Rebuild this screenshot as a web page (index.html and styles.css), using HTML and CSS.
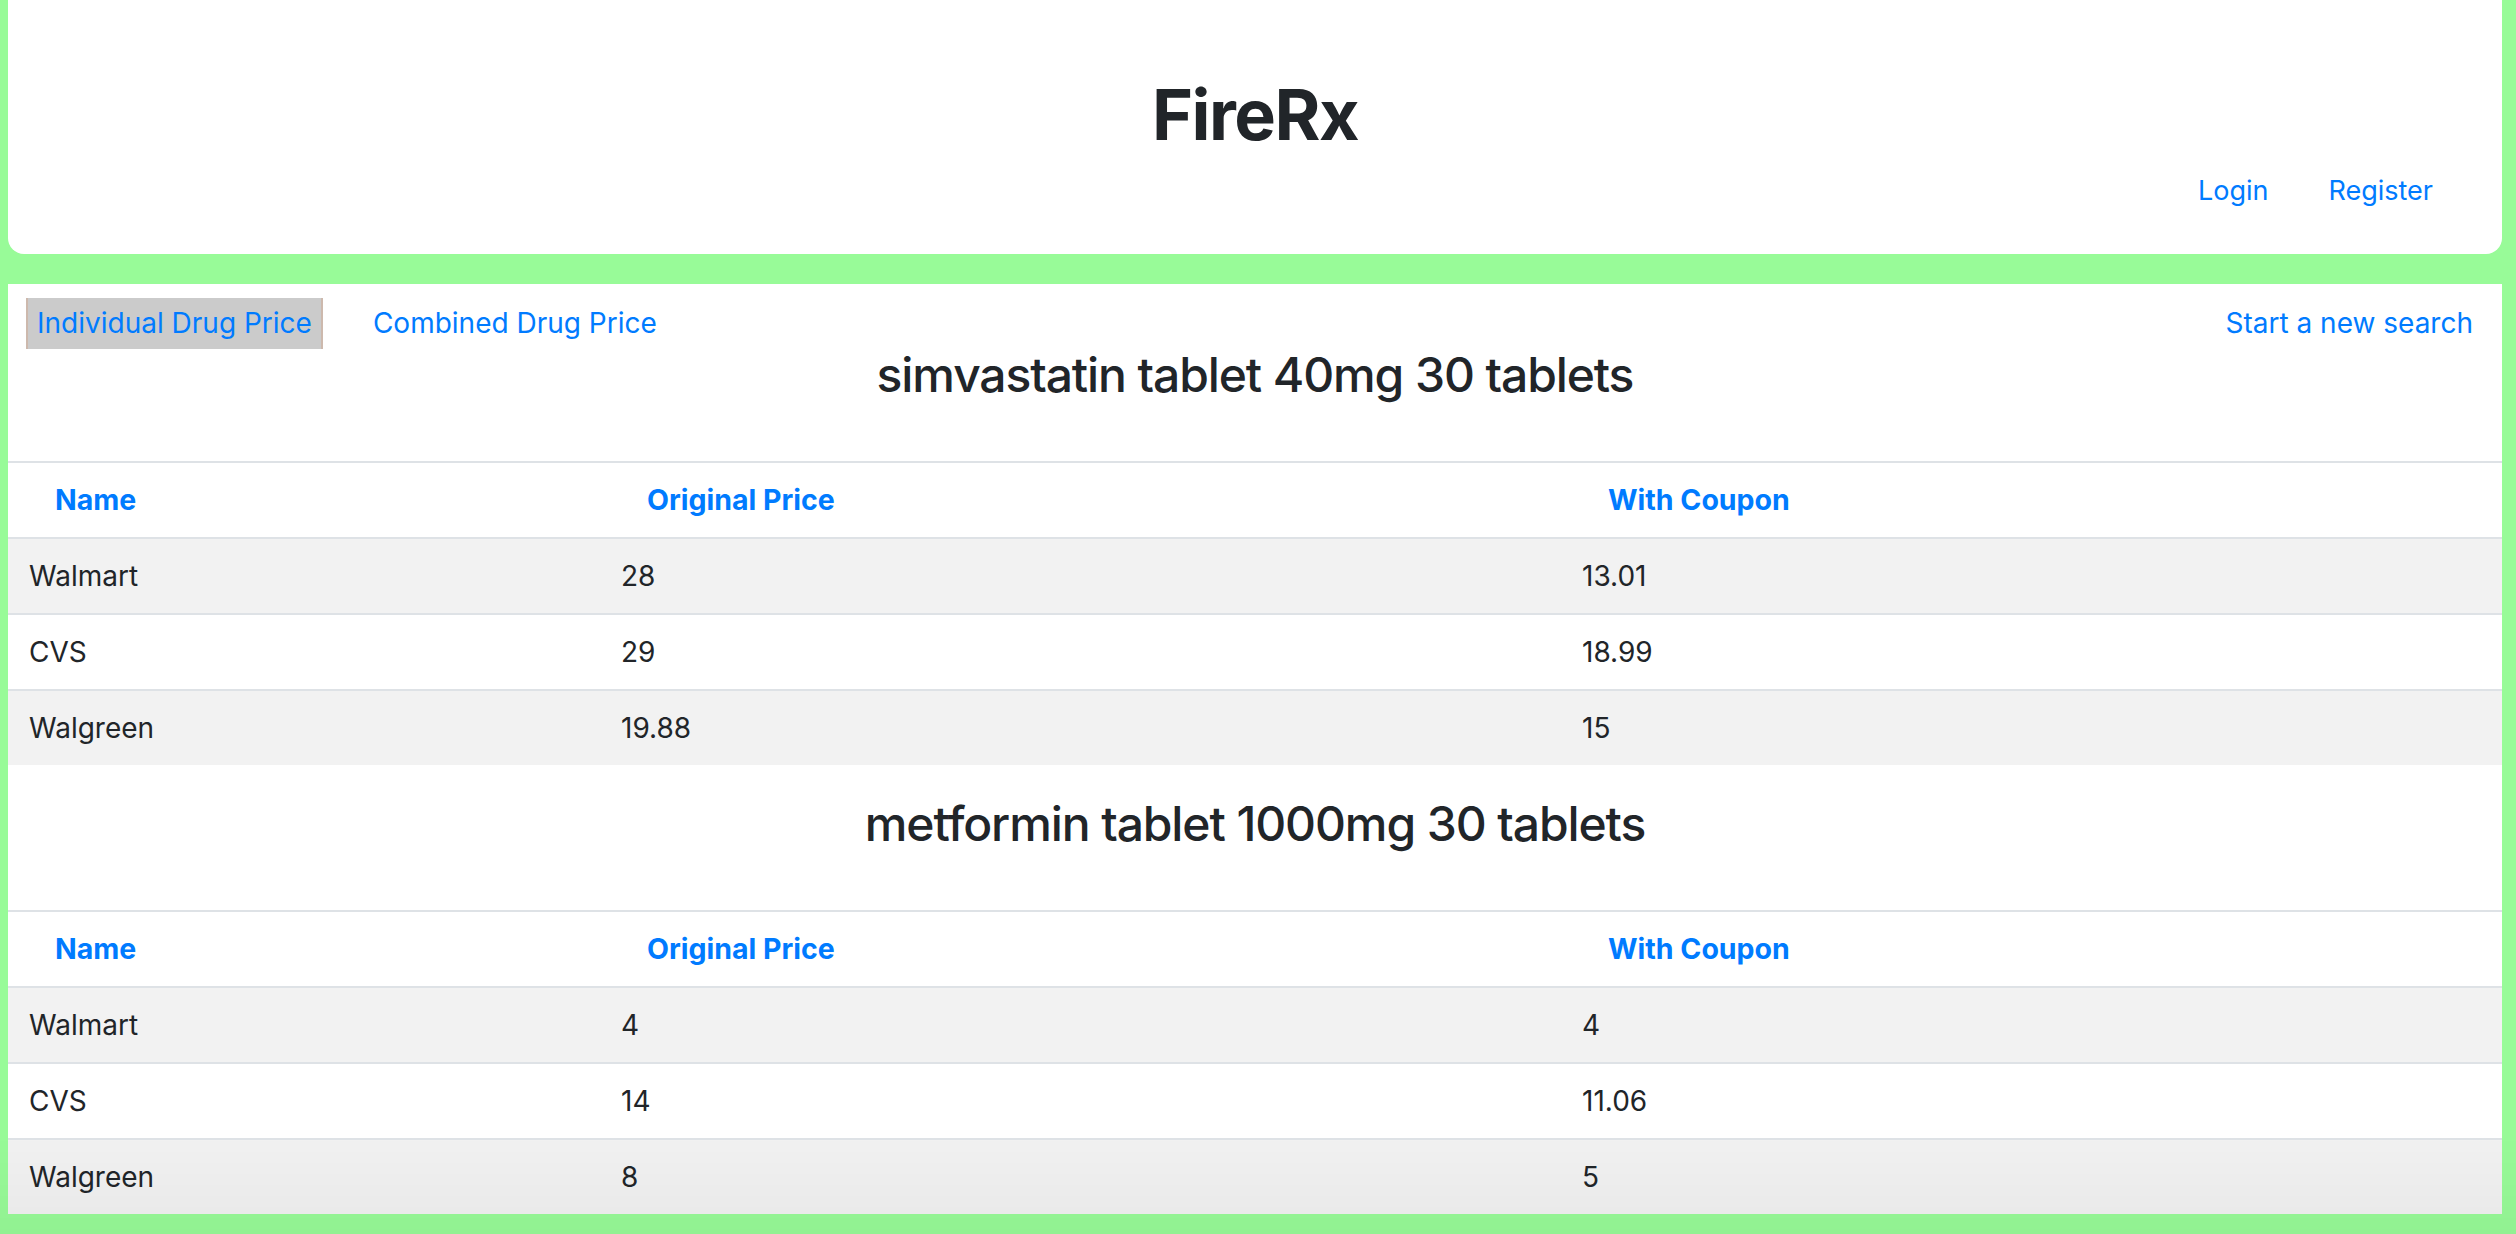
FILE: index.html
```html
<!DOCTYPE html>
<html lang="en">
<head>
<meta charset="utf-8">
<title>FireRx</title>
<link rel="stylesheet" href="styles.css">
</head>
<body>
<header class="top">
  <h1 class="brand">FireRx</h1>
  <nav class="auth">
    <a href="#">Login</a>
    <a href="#">Register</a>
  </nav>
</header>
<main class="content">
  <div class="tabs">
    <a href="#" class="tab active">Individual Drug Price</a>
    <a href="#" class="tab">Combined Drug Price</a>
    <a href="#" class="new-search">Start a new search</a>
  </div>

  <section class="drug">
    <h2 class="drug-title">simvastatin tablet 40mg 30 tablets</h2>
    <table class="prices">
      <colgroup><col class="c-name"><col class="c-orig"><col></colgroup>
      <thead>
        <tr><th>Name</th><th>Original Price</th><th>With Coupon</th></tr>
      </thead>
      <tbody>
        <tr><td>Walmart</td><td>28</td><td>13.01</td></tr>
        <tr><td>CVS</td><td>29</td><td>18.99</td></tr>
        <tr><td>Walgreen</td><td>19.88</td><td>15</td></tr>
      </tbody>
    </table>
  </section>

  <section class="drug">
    <h2 class="drug-title">metformin tablet 1000mg 30 tablets</h2>
    <table class="prices">
      <colgroup><col class="c-name"><col class="c-orig"><col></colgroup>
      <thead>
        <tr><th>Name</th><th>Original Price</th><th>With Coupon</th></tr>
      </thead>
      <tbody>
        <tr><td>Walmart</td><td>4</td><td>4</td></tr>
        <tr><td>CVS</td><td>14</td><td>11.06</td></tr>
        <tr><td>Walgreen</td><td>8</td><td>5</td></tr>
      </tbody>
    </table>
  </section>
</main>
</body>
</html>
```

FILE: styles.css
```css
* { box-sizing: border-box; }

html, body {
  margin: 0;
}

body {
  background: #98fb98;
  padding: 0 14px 40px 8px;
  font-family: Inter, "Noto Sans", "Liberation Sans", sans-serif;
  font-size: 28px;
  color: #212529;
}

body::after {
  content: "";
  position: fixed;
  left: 0;
  right: 0;
  bottom: 0;
  height: 110px;
  background: linear-gradient(to bottom, rgba(0,0,0,0), rgba(0,0,0,0.04));
  pointer-events: none;
}

a {
  color: #007bff;
  text-decoration: none;
}

.top {
  background: #fff;
  border-radius: 0 0 16px 16px;
  height: 254px;
  padding-top: 79px;
}

.brand {
  margin: 0;
  text-align: center;
  font-size: 70px;
  line-height: 72px;
  font-weight: 700;
  letter-spacing: -1.5px;
}

.auth {
  display: flex;
  justify-content: flex-end;
  gap: 60px;
  margin-top: 20px;
  padding-right: 69px;
  font-size: 27px;
  line-height: 40px;
}

.content {
  background: #fff;
  margin-top: 30px;
}

.tabs {
  display: flex;
  align-items: center;
  padding: 14px 29px 0 18px;
  font-size: 28px;
}

.tab {
  line-height: 51px;
  height: 51px;
  padding: 0 9px;
  border-left: 2px solid transparent;
  border-right: 2px solid transparent;
}

.tab.active {
  background: #cbcbcb;
  border-left-color: #cdb9ad;
  border-right-color: #cdb9ad;
}

.tab + .tab {
  margin-left: 39px;
}

.new-search {
  margin-left: auto;
  line-height: 51px;
}

.drug + .drug {
  margin-top: 33px;
}

.drug-title {
  margin: 0 0 60px;
  text-align: center;
  font-size: 48px;
  line-height: 52px;
  font-weight: 500;
  letter-spacing: -1.1px;
}

.prices {
  width: 100%;
  border-collapse: collapse;
}

.c-name { width: 592px; }
.c-orig { width: 961px; }

.prices th,
.prices td {
  border-top: 2px solid #dee2e6;
  padding: 19px 10px 19px 21px;
  line-height: 36px;
  text-align: left;
  vertical-align: middle;
}

.prices th {
  padding-left: 47px;
  color: #007bff;
  font-weight: 700;
  font-size: 28.5px;
}

.prices tbody tr:nth-child(odd) {
  background: #f2f2f2;
}
```
